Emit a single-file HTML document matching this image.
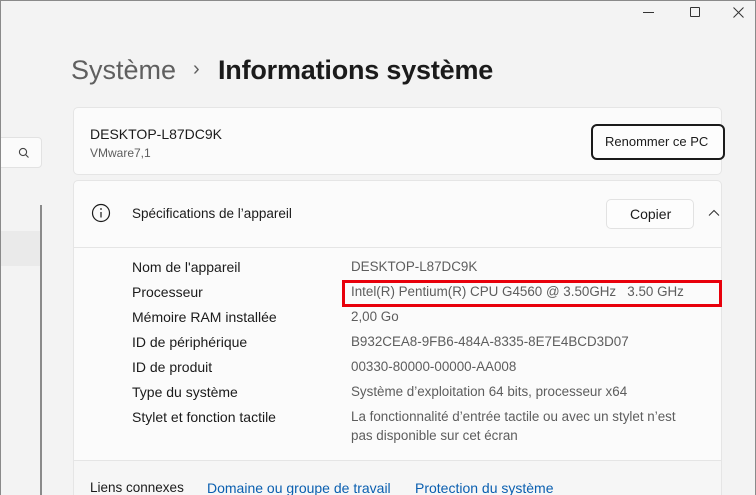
<!DOCTYPE html>
<html><head><meta charset="utf-8"><style>
*{margin:0;padding:0;box-sizing:border-box}
html,body{width:756px;height:495px;overflow:hidden}
body{background:#f3f3f3;font-family:"Liberation Sans",sans-serif;color:#1b1b1b}
#w{position:relative;width:756px;height:495px;overflow:hidden}
.abs{position:absolute}
.win{left:0;top:0;width:756px;height:495px;border:1px solid #8a8a8a;border-bottom:none}
.card{background:#fbfbfb;border:1px solid #e5e5e5;border-radius:5px}
.t{font-size:14px;white-space:nowrap}
.v{color:#5d5d5d;font-size:13.4px}
</style></head><body><div id="w">
<!-- window controls -->
<div class="abs" style="left:643px;top:12px;width:11px;height:1px;background:#333"></div>
<div class="abs" style="left:690px;top:7px;width:10px;height:10px;border:1px solid #333;border-radius:1px"></div>
<svg class="abs" style="left:733px;top:7px" width="11" height="11"><path d="M0.5 0.5L10.5 10.5M10.5 0.5L0.5 10.5" stroke="#333" stroke-width="1"/></svg>
<!-- search -->
<div class="abs" style="left:-6px;top:137px;width:48px;height:31px;background:#fbfbfb;border:1px solid #e2e2e2;border-radius:4px"></div>
<svg class="abs" style="left:18px;top:147px" width="12" height="12"><circle cx="5" cy="5" r="3.6" fill="none" stroke="#444" stroke-width="1.1"/><path d="M7.6 7.6L10.5 10.5" stroke="#444" stroke-width="1.1"/></svg>
<div class="abs" style="left:0;top:231px;width:40px;height:35px;background:#eaeaea"></div>
<div class="abs" style="left:40px;top:205px;width:2px;height:290px;background:#8a8a8a"></div>
<!-- title -->
<div class="abs" style="left:71px;top:55px;font-size:27px;color:#5f5f5f;white-space:nowrap">Système</div>
<div class="abs" style="left:193px;top:58px;font-size:20px;color:#5f5f5f">›</div>
<div class="abs" style="left:218px;top:55px;font-size:27px;font-weight:bold;color:#1b1b1b;white-space:nowrap;letter-spacing:-0.2px">Informations système</div>
<!-- card1 -->
<div class="abs card" style="left:73px;top:107px;width:649px;height:68px"></div>
<div class="abs t" style="left:90px;top:126px">DESKTOP-L87DC9K</div>
<div class="abs" style="left:90px;top:146px;font-size:12px;color:#5d5d5d">VMware7,1</div>
<div class="abs" style="left:591px;top:124px;width:134px;height:36px;border:2px solid #1b1b1b;border-radius:6px;background:#fdfdfd"></div>
<div class="abs t" style="left:605px;top:134px;font-size:13px">Renommer ce PC</div>
<!-- card2 -->
<div class="abs card" style="left:73px;top:180px;width:649px;height:330px;border-radius:5px 5px 0 0"></div>
<div class="abs" style="left:74px;top:247px;width:647px;height:1px;background:#e5e5e5"></div>
<div class="abs" style="left:74px;top:460px;width:647px;height:40px;background:#f6f6f6;border-top:1px solid #e5e5e5"></div>
<svg class="abs" style="left:91px;top:203px" width="20" height="20"><circle cx="10" cy="10" r="8.5" fill="none" stroke="#1b1b1b" stroke-width="1.2"/><circle cx="10" cy="6" r="0.9" fill="#1b1b1b"/><path d="M10 9V14.5" stroke="#1b1b1b" stroke-width="1.2"/></svg>
<div class="abs t" style="left:132px;top:206px;font-size:13.5px">Spécifications de l’appareil</div>
<div class="abs" style="left:606px;top:199px;width:88px;height:30px;border:1px solid #e2e2e2;border-radius:5px;background:#fdfdfd"></div>
<div class="abs t" style="left:630px;top:206px">Copier</div>
<svg class="abs" style="left:708px;top:209px" width="12" height="8"><path d="M1 6.5L6 1.5L11 6.5" fill="none" stroke="#333" stroke-width="1.1"/></svg>
<!-- rows -->
<div class="abs t" style="left:132px;top:259px">Nom de l'appareil</div><div class="abs t v" style="left:351px;top:259px">DESKTOP-L87DC9K</div>
<div class="abs t" style="left:132px;top:284px">Processeur</div><div class="abs t v" style="left:351px;top:284px">Intel(R) Pentium(R) CPU G4560 @ 3.50GHz&nbsp;&nbsp;&nbsp;3.50 GHz</div>
<div class="abs t" style="left:132px;top:309px">Mémoire RAM installée</div><div class="abs t v" style="left:351px;top:309px">2,00 Go</div>
<div class="abs t" style="left:132px;top:334px">ID de périphérique</div><div class="abs t v" style="left:351px;top:334px">B932CEA8-9FB6-484A-8335-8E7E4BCD3D07</div>
<div class="abs t" style="left:132px;top:359px">ID de produit</div><div class="abs t v" style="left:351px;top:359px">00330-80000-00000-AA008</div>
<div class="abs t" style="left:132px;top:384px">Type du système</div><div class="abs t v" style="left:351px;top:384px">Système d’exploitation 64 bits, processeur x64</div>
<div class="abs t" style="left:132px;top:409px">Stylet et fonction tactile</div><div class="abs t v" style="left:351px;top:409px">La fonctionnalité d’entrée tactile ou avec un stylet n’est</div>
<div class="abs t v" style="left:351px;top:428px">pas disponible sur cet écran</div>
<div class="abs" style="left:342px;top:280px;width:380px;height:27px;border:3px solid #e8000b"></div>
<!-- links -->
<div class="abs t" style="left:90px;top:480px;font-size:13.5px">Liens connexes</div>
<div class="abs t" style="left:207px;top:480px;color:#0a5fb0">Domaine ou groupe de travail</div>
<div class="abs t" style="left:415px;top:480px;color:#0a5fb0">Protection du système</div>
<div class="abs win"></div>
</div></body></html>
